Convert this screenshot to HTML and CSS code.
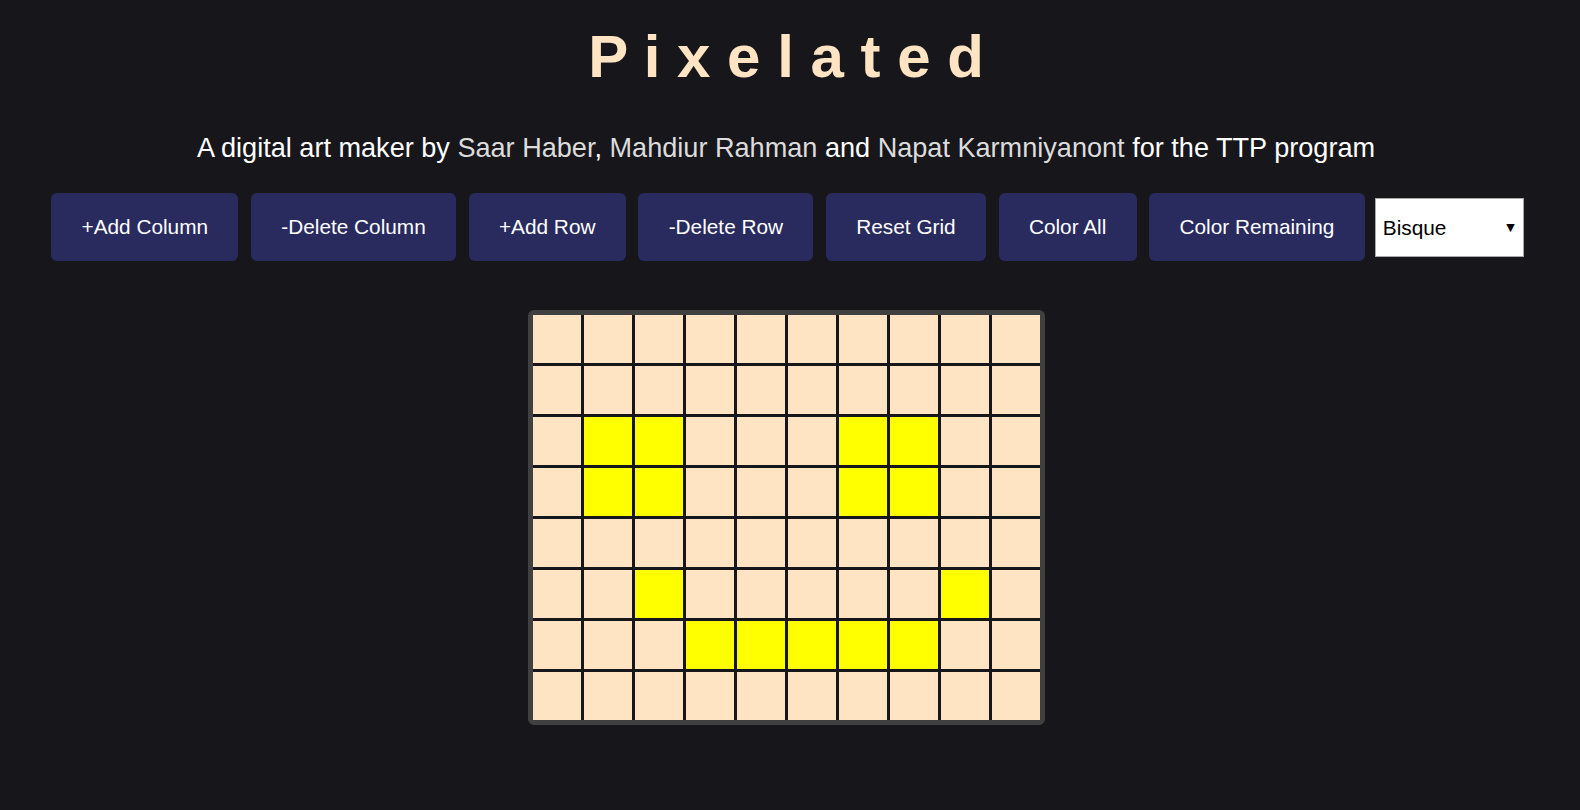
FILE: index.html
```html
<!DOCTYPE html>
<html lang="en">
<head>
<meta charset="utf-8">
<title>Pixelated</title>
<link rel="stylesheet" href="styles.css">
</head>
<body>
<div class="page">
  <h1 class="title">P i x e l a t e d</h1>
  <p class="subtitle">A digital art maker by <a class="name" href="#">Saar Haber</a>, <a class="name" href="#">Mahdiur Rahman</a> and <a class="name" href="#">Napat Karmniyanont</a> for the TTP program</p>
  <div class="controls">
    <button class="btn">+Add Column</button>
    <button class="btn">-Delete Column</button>
    <button class="btn">+Add Row</button>
    <button class="btn">-Delete Row</button>
    <button class="btn">Reset Grid</button>
    <button class="btn">Color All</button>
    <button class="btn">Color Remaining</button>
    <div class="select-wrap">
      <select class="color-select">
        <option>Bisque</option>
        <option>Yellow</option>
        <option>Red</option>
        <option>Blue</option>
        <option>Green</option>
      </select>
    </div>
  </div>
  <div class="grid-wrap">
    <div class="grid">
      <div class="cell"></div><div class="cell"></div><div class="cell"></div><div class="cell"></div><div class="cell"></div><div class="cell"></div><div class="cell"></div><div class="cell"></div><div class="cell"></div><div class="cell"></div>
      <div class="cell"></div><div class="cell"></div><div class="cell"></div><div class="cell"></div><div class="cell"></div><div class="cell"></div><div class="cell"></div><div class="cell"></div><div class="cell"></div><div class="cell"></div>
      <div class="cell"></div><div class="cell yellow"></div><div class="cell yellow"></div><div class="cell"></div><div class="cell"></div><div class="cell"></div><div class="cell yellow"></div><div class="cell yellow"></div><div class="cell"></div><div class="cell"></div>
      <div class="cell"></div><div class="cell yellow"></div><div class="cell yellow"></div><div class="cell"></div><div class="cell"></div><div class="cell"></div><div class="cell yellow"></div><div class="cell yellow"></div><div class="cell"></div><div class="cell"></div>
      <div class="cell"></div><div class="cell"></div><div class="cell"></div><div class="cell"></div><div class="cell"></div><div class="cell"></div><div class="cell"></div><div class="cell"></div><div class="cell"></div><div class="cell"></div>
      <div class="cell"></div><div class="cell"></div><div class="cell yellow"></div><div class="cell"></div><div class="cell"></div><div class="cell"></div><div class="cell"></div><div class="cell"></div><div class="cell yellow"></div><div class="cell"></div>
      <div class="cell"></div><div class="cell"></div><div class="cell"></div><div class="cell yellow"></div><div class="cell yellow"></div><div class="cell yellow"></div><div class="cell yellow"></div><div class="cell yellow"></div><div class="cell"></div><div class="cell"></div>
      <div class="cell"></div><div class="cell"></div><div class="cell"></div><div class="cell"></div><div class="cell"></div><div class="cell"></div><div class="cell"></div><div class="cell"></div><div class="cell"></div><div class="cell"></div>
    </div>
  </div>
</div>
</body>
</html>
```

FILE: styles.css
```css
html, body {
  background: #17161b;
}
body {
  margin: 8px;
  font-family: "Liberation Sans", Arial, sans-serif;
  color: #ffffff;
}
.page {
  padding-right: 8px;
  display: flex;
  flex-direction: column;
  align-items: center;
}
.title {
  margin: 14px 0 0;
  font-size: 60px;
  line-height: 69px;
  font-weight: bold;
  color: #ffe4c4;
  text-align: center;
}
.subtitle {
  margin: 41px 0 0;
  font-size: 27.1px;
  line-height: 31px;
  text-align: center;
}
.name {
  color: #dcdcdc;
  text-decoration: none;
}
.controls {
  margin-top: 30px;
  padding-left: 3px;
  display: flex;
  align-items: center;
  justify-content: center;
  gap: 12.6px;
}
.btn {
  margin: 0;
  font-family: "Liberation Sans", Arial, sans-serif;
  font-size: 20.8px;
  line-height: 24px;
  padding: 22px 30.3px;
  border: none;
  border-radius: 6px;
  background: #292a5e;
  color: #ffffff;
}
.select-wrap {
  position: relative;
  margin-left: -2.5px;
  display: flex;
}
.select-wrap::after {
  content: "\25BC";
  position: absolute;
  right: 9px;
  top: 50%;
  transform: translateY(-50%);
  font-family: "DejaVu Sans", sans-serif;
  font-size: 11px;
  color: #000000;
  pointer-events: none;
}
.color-select {
  appearance: none;
  -webkit-appearance: none;
  margin: 0;
  width: 149px;
  height: 59px;
  font-family: "Liberation Sans", Arial, sans-serif;
  font-size: 20.8px;
  padding: 0 0 0 7px;
  border: 1px solid #a9a9a9;
  border-radius: 0;
  background: #ffffff;
  color: #000000;
}
.grid-wrap {
  margin-top: 49px;
  border: 5px solid #404040;
  border-radius: 6px;
  background: #17161b;
}
.grid {
  display: grid;
  grid-template-columns: repeat(10, 48px);
  grid-auto-rows: 48px;
  gap: 3px;
  background: #17161b;
}
.cell {
  background: #ffe4c4;
}
.cell.yellow {
  background: #ffff00;
}
```
